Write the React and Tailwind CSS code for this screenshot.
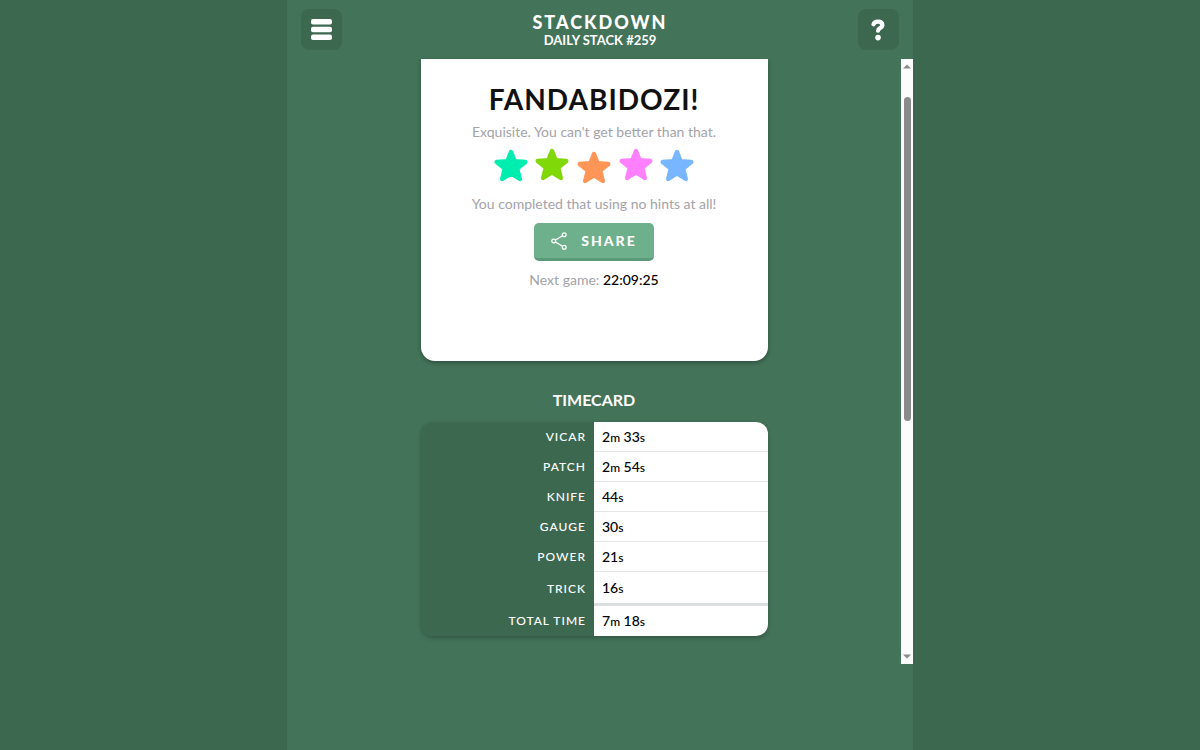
import React from "react";
import clsx from "clsx";

const STAR_PATH =
  "M0 -14 L3.7 -4.8 L14.3 -4 L6.2 2.6 L8.8 13 L0 7.4 L-8.8 13 L-6.2 2.6 L-14.3 -4 L-3.7 -4.8 Z";

const stars = [
  { x: 17, y: 19, color: "#00edb0" },
  { x: 58, y: 18, color: "#80d808" },
  { x: 100, y: 21, color: "#ff9557" },
  { x: 142, y: 18, color: "#ff80ff" },
  { x: 183, y: 19, color: "#78b6ff" },
];

const times = [
  { word: "VICAR", minutes: 2, seconds: 33 },
  { word: "PATCH", minutes: 2, seconds: 54 },
  { word: "KNIFE", seconds: 44 },
  { word: "GAUGE", seconds: 30 },
  { word: "POWER", seconds: 21 },
  { word: "TRICK", seconds: 16 },
];

const Stars = () => (
  <svg
    width="200"
    height="38"
    viewBox="0 0 200 38"
    role="img"
    aria-label="Five stars"
  >
    {stars.map((star) => (
      <path
        key={star.color}
        d={STAR_PATH}
        transform={`translate(${star.x} ${star.y})`}
        fill={star.color}
        stroke={star.color}
        strokeWidth="4.4"
        strokeLinejoin="round"
      />
    ))}
  </svg>
);

const ShareIcon = () => (
  <svg
    width="16"
    height="18"
    viewBox="0 0 16 18"
    fill="none"
    stroke="currentColor"
    strokeWidth="1.3"
    aria-hidden="true"
  >
    <circle cx="2.7" cy="9" r="1.9" />
    <circle cx="13.2" cy="2.8" r="1.9" />
    <circle cx="13.2" cy="15.2" r="1.9" />
    <path d="M4.4 8 L11.5 3.8 M4.4 10 L11.5 14.2" />
  </svg>
);

const Header = () => (
  <header className="flex h-[59px] shrink-0 items-center justify-between px-3.5">
    <button
      type="button"
      aria-label="Menu"
      className="flex size-[41px] items-center justify-center rounded-lg bg-[#3d6850] text-white"
    >
      <svg width="21" height="21" viewBox="0 0 21 21" fill="currentColor">
        <rect width="21" height="5.4" rx="2" />
        <rect y="7.8" width="21" height="5.4" rx="2" />
        <rect y="15.6" width="21" height="5.4" rx="2" />
      </svg>
    </button>
    <div className="text-center text-white">
      <h1 className="text-lg leading-5 font-black tracking-[2px]">STACKDOWN</h1>
      <p className="text-[13px] leading-4 font-bold">DAILY STACK #259</p>
    </div>
    <button
      type="button"
      aria-label="Help"
      className="flex size-[41px] items-center justify-center rounded-lg bg-[#3d6850] text-white"
    >
      <svg width="14" height="22" viewBox="0 0 14 22" fill="none">
        <path
          d="M2.5 5.3 C3.2 3.2 4.9 2.6 7 2.6 C9.7 2.6 11.4 4 11.4 6.2 C11.4 9 7.2 8.6 7 11.6"
          stroke="currentColor"
          strokeWidth="4.2"
          strokeLinecap="round"
          strokeLinejoin="round"
        />
        <circle cx="7" cy="18.6" r="2.8" fill="currentColor" />
      </svg>
    </button>
  </header>
);

const ResultCard = () => (
  <section className="flex h-[302px] w-full flex-col items-center rounded-b-[14px] bg-white pt-5 text-sm text-[#a3a3a8] shadow-[0_2px_4px_rgba(0,0,0,0.3)]">
    <h2 className="text-[28px] leading-10 font-bold tracking-[1px] text-[#111]">
      FANDABIDOZI!
    </h2>
    <p className="mt-[3px] leading-5">
      Exquisite. You can't get better than that.
    </p>
    <div className="mt-[5px]">
      <Stars />
    </div>
    <p className="mt-[9px] leading-5">
      You completed that using no hints at all!
    </p>
    <button
      type="button"
      className="mt-[9px] flex h-[38px] w-30 items-center justify-center gap-3.5 rounded-[5px] border-b-3 border-[#5a9a78] bg-[#6eb08c] text-sm font-black tracking-[2px] text-white"
    >
      <ShareIcon />
      SHARE
    </button>
    <p className="mt-[9px] leading-5">
      Next game: <span className="font-medium text-black">22:09:25</span>
    </p>
  </section>
);

const Duration = ({ minutes, seconds }) => (
  <>
    {minutes && (
      <>
        {minutes}
        <span className="text-xs">m</span>{" "}
      </>
    )}
    {seconds}
    <span className="text-xs">s</span>
  </>
);

const TimeRow = ({ label, minutes, seconds, className, border }) => (
  <tr className={className}>
    <th
      scope="row"
      className="w-1/2 bg-[#3d6850] p-0 pr-2 text-right text-xs font-medium tracking-[1px] text-white"
    >
      {label}
    </th>
    <td
      className={clsx(
        "bg-white p-0 pl-2 text-sm font-medium text-black",
        border,
      )}
    >
      <Duration minutes={minutes} seconds={seconds} />
    </td>
  </tr>
);

const Timecard = () => (
  <section className="mt-[25px] w-full">
    <h2
      id="timecard"
      className="mb-2 text-center text-base leading-7 font-bold text-white"
    >
      TIMECARD
    </h2>
    <div className="overflow-hidden rounded-xl shadow-[0_2px_4px_rgba(0,0,0,0.25)]">
      <table
        aria-labelledby="timecard"
        className="w-full table-fixed border-separate border-spacing-0"
      >
        <tbody>
          {times.map((time, i) => (
            <TimeRow
              key={time.word}
              label={time.word}
              minutes={time.minutes}
              seconds={time.seconds}
              className={i === times.length - 1 ? "h-[34px]" : "h-[30px]"}
              border={
                i === times.length - 1
                  ? "border-b-3 border-[#dcdfdf]"
                  : "border-b border-[#e2e6e4]"
              }
            />
          ))}
          <TimeRow
            label="TOTAL TIME"
            minutes={7}
            seconds={18}
            className="h-[30px]"
          />
        </tbody>
      </table>
    </div>
  </section>
);

const ScrollBar = () => (
  <div
    aria-hidden="true"
    className="flex w-3 shrink-0 flex-col items-center bg-[#fcfcfc] py-1 text-[#8b8b8b]"
  >
    <svg width="8" height="6" viewBox="0 0 8 6" fill="currentColor">
      <path d="M0 5.5 L4 1.5 L8 5.5 Z" />
    </svg>
    <div className="mt-7 h-[324px] w-[7px] rounded-full bg-current" />
    <svg
      className="mt-auto"
      width="8"
      height="6"
      viewBox="0 0 8 6"
      fill="currentColor"
    >
      <path d="M0 0.5 L4 4.5 L8 0.5 Z" />
    </svg>
  </div>
);

const App = () => {
  return (
    <div className="min-h-screen bg-[#3d6850] font-['Lato','Noto_Sans',sans-serif]">
      <div className="mx-auto flex min-h-screen max-w-[626px] flex-col bg-[#437359] pb-[86px]">
        <Header />
        <main className="flex flex-1">
          <div className="flex flex-1 justify-center">
            <div className="w-full max-w-[347px]">
              <ResultCard />
              <Timecard />
            </div>
          </div>
          <ScrollBar />
        </main>
      </div>
    </div>
  );
};

export default App;
